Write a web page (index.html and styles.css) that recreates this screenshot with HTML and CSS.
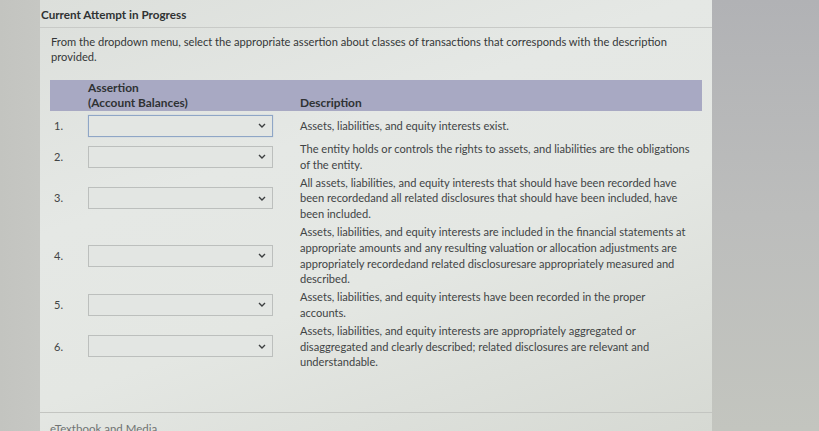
FILE: index.html
```html
<!DOCTYPE html>
<html>
<head>
<meta charset="utf-8">
<link rel="stylesheet" href="styles.css">
</head>
<body>
<div class="page">
  <div class="card">
    <div class="title">Current Attempt in Progress</div>
    <div class="content">
      <p class="instr">From the dropdown menu, select the appropriate assertion about classes of transactions that corresponds with the description provided.</p>
      <table class="grid">
        <thead>
          <tr>
            <th class="c-num"></th>
            <th class="c-sel">Assertion<br>(Account Balances)</th>
            <th class="c-desc">Description</th>
          </tr>
        </thead>
        <tbody>
          <tr class="r1">
            <td class="c-num">1.</td>
            <td class="c-sel"><div class="select focus"><svg class="chev" width="8" height="5" viewBox="0 0 8 5"><path d="M1 1 L4 4 L7 1" fill="none" stroke="#3c3f40" stroke-width="1.4"/></svg></div></td>
            <td class="c-desc">Assets, liabilities, and equity interests exist.</td>
          </tr>
          <tr>
            <td class="c-num">2.</td>
            <td class="c-sel"><div class="select"><svg class="chev" width="8" height="5" viewBox="0 0 8 5"><path d="M1 1 L4 4 L7 1" fill="none" stroke="#3c3f40" stroke-width="1.4"/></svg></div></td>
            <td class="c-desc">The entity holds or controls the rights to assets, and liabilities are the obligations of the entity.</td>
          </tr>
          <tr>
            <td class="c-num">3.</td>
            <td class="c-sel"><div class="select"><svg class="chev" width="8" height="5" viewBox="0 0 8 5"><path d="M1 1 L4 4 L7 1" fill="none" stroke="#3c3f40" stroke-width="1.4"/></svg></div></td>
            <td class="c-desc">All assets, liabilities, and equity interests that should have been recorded have been recordedand all related disclosures that should have been included, have been included.</td>
          </tr>
          <tr>
            <td class="c-num">4.</td>
            <td class="c-sel"><div class="select"><svg class="chev" width="8" height="5" viewBox="0 0 8 5"><path d="M1 1 L4 4 L7 1" fill="none" stroke="#3c3f40" stroke-width="1.4"/></svg></div></td>
            <td class="c-desc">Assets, liabilities, and equity interests are included in the financial statements at appropriate amounts and any resulting valuation or allocation adjustments are appropriately recordedand related disclosuresare appropriately measured and described.</td>
          </tr>
          <tr>
            <td class="c-num">5.</td>
            <td class="c-sel"><div class="select"><svg class="chev" width="8" height="5" viewBox="0 0 8 5"><path d="M1 1 L4 4 L7 1" fill="none" stroke="#3c3f40" stroke-width="1.4"/></svg></div></td>
            <td class="c-desc">Assets, liabilities, and equity interests have been recorded in the proper accounts.</td>
          </tr>
          <tr>
            <td class="c-num">6.</td>
            <td class="c-sel"><div class="select"><svg class="chev" width="8" height="5" viewBox="0 0 8 5"><path d="M1 1 L4 4 L7 1" fill="none" stroke="#3c3f40" stroke-width="1.4"/></svg></div></td>
            <td class="c-desc">Assets, liabilities, and equity interests are appropriately aggregated or disaggregated and clearly described; related disclosures are relevant and understandable.</td>
          </tr>
        </tbody>
      </table>
    </div>
    <div class="footer">eTextbook and Media</div>
  </div>
</div>
</body>
</html>
```

FILE: styles.css
```css
html, body {
  margin: 0;
  padding: 0;
}
body {
  width: 819px;
  height: 431px;
  overflow: hidden;
  background: linear-gradient(to bottom, #b1b2b5 0%, #bcbdbc 50%, #c3c5bf 100%);
  font-family: Lato, "Open Sans", sans-serif;
  color: #3a3d3e;
}
.page {
  display: flex;
  height: 431px;
  background: linear-gradient(to right, #c3c4c0 0, #c6c7c3 40px, transparent 40px);
}
.card {
  margin-left: 40px;
  width: 672px;
  height: 431px;
  background: linear-gradient(160deg, #dcdfdb 0%, #e5e8e5 35%, #e4e7e3 60%, #d6d9d3 100%);
  display: flex;
  flex-direction: column;
}
.title {
  font-weight: 700;
  font-size: 11.7px;
  line-height: 14px;
  padding: 7px 0 6px 1px;
  border-bottom: 1px solid #c8cac7;
  color: #2f3233;
}
.content {
  padding: 0 10px 0 10px;
  flex: 1;
}
.instr {
  margin: 7px 0 0 1px;
  font-size: 11.15px;
  line-height: 14.5px;
  width: 640px;
  color: #343738;
}
.grid {
  margin-top: 16px;
  border-collapse: collapse;
  width: 652px;
  table-layout: fixed;
}
.grid th {
  background: #a8a9c3;
  font-weight: 700;
  font-size: 11.9px;
  line-height: 15px;
  text-align: left;
  vertical-align: bottom;
  padding: 0 0 1px 0;
  height: 30px;
  color: #2f3234;
}
.grid th.c-num { width: 38px; }
.grid th.c-sel { width: 212px; }
.grid td {
  font-size: 11.1px;
  line-height: 15.8px;
  padding: 1px 0;
  vertical-align: middle;
  color: #414445;
}
.grid td.c-desc {
  padding-right: 11px;
}
.grid td.c-num {
  padding-left: 4px;
  font-size: 11px;
}
.grid tr.r1 td {
  height: 27px;
}
.select {
  width: 183px;
  height: 20px;
  border: 1px solid #bcbfbd;
  background: #e3e6e3;
  box-sizing: content-box;
  display: flex;
  align-items: center;
  justify-content: flex-end;
}
.select.focus {
  border-color: #8fa6c6;
  box-shadow: 0 0 1px #a9bcd6;
}
.chev {
  margin-right: 6px;
}
.footer {
  margin-top: auto;
  border-top: 1px solid #c3c5c1;
  padding: 9px 0 0 10px;
  height: 9px;
  font-size: 11.5px;
  line-height: 14px;
  color: #707372;
}
```
